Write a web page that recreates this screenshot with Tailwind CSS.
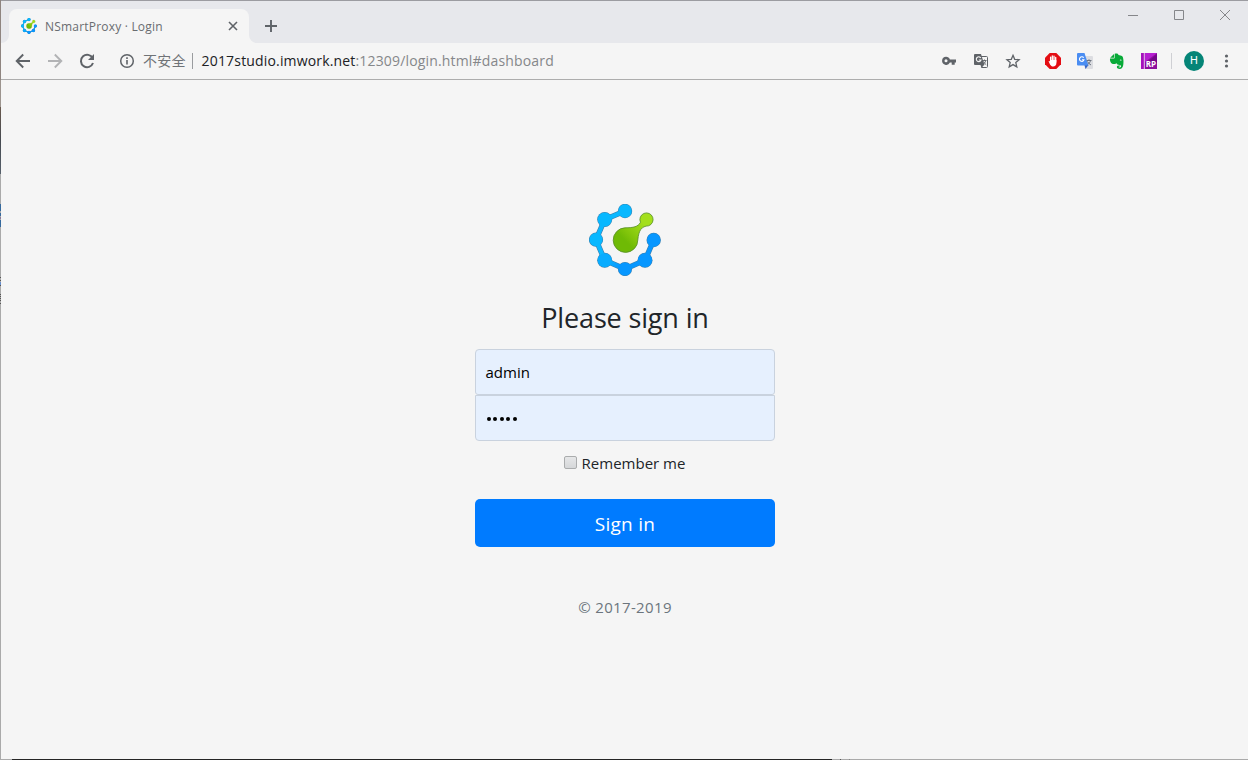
<!DOCTYPE html>
<html lang="en">
<head>
<meta charset="utf-8">
<title>NSmartProxy · Login</title>
<script src="https://cdn.jsdelivr.net/npm/@tailwindcss/browser@4"></script>
</head>
<body class="relative flex h-[760px] w-[1248px] flex-col overflow-hidden bg-[#f5f5f5] font-['Open_Sans','Noto_Sans_CJK_SC',sans-serif] text-[#212529]">
<svg class="absolute h-0 w-0">
  <defs>
    <linearGradient id="b" gradientUnits="userSpaceOnUse" x1="0" y1="0" x2="72" y2="72"><stop offset=".48" stop-color="#0bb8ff"/><stop offset=".66" stop-color="#0797ff"/></linearGradient>
    <linearGradient id="g" x1="0" y1="1" x2="1" y2="0"><stop offset=".3" stop-color="#6fba05"/><stop offset=".42" stop-color="#80c40a"/><stop offset=".75" stop-color="#a3df1c"/></linearGradient>
  </defs>
  <symbol id="logo" viewBox="0 0 72 72">
    <g fill="#3a7fae">
      <path d="M36 7 15.7 15.5 7 35.7l8.7 20.6L36 65l20-8.7L64.7 36" fill="none" stroke="#3a7fae" stroke-width="5.400"/>
      <circle cx="36" cy="7" r="7.200"/><circle cx="15.700" cy="15.500" r="7.500"/><circle cx="7" cy="35.700" r="7.100"/><circle cx="15.700" cy="56.300" r="7.500"/><circle cx="36" cy="65" r="7.100"/><circle cx="56" cy="56.300" r="7.500"/><circle cx="64.700" cy="36" r="7.200"/>
    </g>
    <path d="M36 7 15.7 15.5 7 35.7l8.7 20.6L36 65l20-8.700L64.700 36" fill="none" stroke="url(#b)" stroke-width="4.200"/>
    <g fill="#08b8ff"><circle cx="36" cy="7" r="6.700"/><circle cx="15.700" cy="15.500" r="7"/><circle cx="7" cy="35.700" r="6.600"/><circle cx="15.700" cy="56.300" r="7" fill="#08acff"/></g>
    <g fill="#0797ff"><circle cx="36" cy="65" r="6.600"/><circle cx="56" cy="56.300" r="7"/><circle cx="64.700" cy="36" r="6.700"/></g>
    <path d="M36 23.800c8.500 0 13-1 15.500-5.500a6.600 6.600 0 1 1 8 3.500c-7 .5-9.700 4.200-10.700 14.200A12.300 12.300 0 1 1 36 23.800z" fill="url(#g)" stroke="#568d26" stroke-width=".8"/>
  </symbol>
</svg>

<header class="flex h-[43px] shrink-0 items-end border-t border-[#9c9ca1] bg-[#e7e8ec] pl-[1px]">
  <svg class="h-2 w-2 shrink-0" viewBox="0 0 8 8"><path d="M8 0v8H0a8 8 0 0 0 8-8z" fill="#f5f5f5"/></svg>
  <div class="flex h-[34px] w-[240px] items-center rounded-t-lg bg-[#f5f5f5] pl-3 pr-[11px]">
    <svg class="h-4 w-4"><use href="#logo"/></svg>
    <span class="ml-2 grow whitespace-nowrap pt-[2px] text-[12px] tracking-[0.2px] text-[#696c70]">NSmartProxy · Login</span>
    <svg class="h-[10px] w-[10px]" viewBox="0 0 10 10"><path d="M1 1l8 8M9 1l-8 8" stroke="#5f6368" stroke-width="1.600"/></svg>
  </div>
  <svg class="h-2 w-2 shrink-0" viewBox="0 0 8 8"><path d="M0 0v8h8a8 8 0 0 1-8-8z" fill="#f5f5f5"/></svg>
  <svg class="mb-[11px] ml-[8px] h-3 w-3" viewBox="0 0 12 12"><path d="M6 0v12M0 6h12" stroke="#5f6368" stroke-width="1.900"/></svg>
  <div class="mb-[23px] ml-auto mr-[18px] flex items-center gap-[36px] text-[#85868a]">
    <svg class="h-[10px] w-[10px]" viewBox="0 0 10 10"><path d="M0 5.500h10" stroke="currentColor"/></svg>
    <svg class="h-[10px] w-[10px]" viewBox="0 0 10 10"><path d="M.5.5h9v9h-9z" fill="none" stroke="currentColor"/></svg>
    <svg class="h-[10px] w-[10px]" viewBox="0 0 10 10"><path d="M0 0l10 10M10 0L0 10" stroke="currentColor"/></svg>
  </div>
</header>

<nav class="flex h-[37px] shrink-0 items-center border-b border-[#adadad] pl-[13px] text-[#5f6368]">
  <svg class="h-5 w-5" viewBox="0 0 20 20" fill="none" stroke="currentColor" stroke-width="1.900"><path d="M17 10H4M10.200 3.500 3.700 10l6.500 6.500"/></svg>
  <svg class="ml-3 h-5 w-5 text-[#b2b3b5]" viewBox="0 0 20 20" fill="none" stroke="currentColor" stroke-width="1.900"><path d="M3 10h13M9.800 3.500l6.500 6.500-6.500 6.500"/></svg>
  <svg class="ml-3 h-5 w-5" viewBox="0 0 20 20"><path d="M15.700 7.200A6.200 6.200 0 1 0 16 12" fill="none" stroke="currentColor" stroke-width="2"/><path d="M17 3v6h-6z" fill="currentColor"/></svg>
  <svg class="ml-[22px] h-4 w-4" viewBox="0 0 16 16"><circle cx="8" cy="8" r="6.300" fill="none" stroke="currentColor" stroke-width="1.500"/><path d="M7.200 7h1.600v4.500H7.200zM7.200 4.300h1.600v1.600H7.200z" fill="currentColor"/></svg>
  <span class="mb-[2px] ml-[8px] whitespace-nowrap font-['Noto_Sans_CJK_SC',sans-serif] text-[14px] tracking-[0.2px] text-[#6f7377]">不安全</span>
  <span class="ml-[6px] h-4 w-px bg-[#9a9c9f]"></span>
  <span class="mb-[2px] ml-[9px] whitespace-nowrap text-[14px] tracking-[0.165px] text-[#85878a]"><span class="text-[#202124]">2017studio.imwork.net</span>:12309/login.html#dashboard</span>
  <div class="ml-auto mr-[14px] flex items-center">
    <svg class="h-4 w-4" viewBox="0 0 16 16"><path d="M5 3.700a4.100 4.100 0 0 1 3.900 2.800H15v3h-1.300v2.300h-3V9.500H8.900A4.100 4.100 0 1 1 5 3.700z" fill="currentColor"/><circle cx="5" cy="7.800" r="1.500" fill="#f5f5f5"/></svg>
    <svg class="ml-4 h-4 w-4" viewBox="0 0 16 16"><path d="M6 3.500h7.500a1 1 0 0 1 1 1v9a1 1 0 0 1-1 1H8.500" fill="none" stroke="currentColor"/><path d="M2 1h6l3.500 11H2a1 1 0 0 1-1-1V2a1 1 0 0 1 1-1zM7.500 12h3.500l-2.500 3z" fill="currentColor"/><path d="M7.800 5A2.400 2.400 0 1 0 8 7H5.800" fill="none" stroke="#f5f5f5" stroke-width="1.100"/><path d="M9.500 7.500h4M11.500 6.500v1M12.800 7.500c-.3 1.500-1.300 2.700-2.300 3.500M10.500 8.500c.7 1.400 1.600 2.400 2.700 3.200" fill="none" stroke="currentColor" stroke-width=".9"/></svg>
    <svg class="ml-4 h-4 w-4" viewBox="0 0 16 16"><path d="M8 2.300l1.700 4 4.400.4-3.300 2.900 1 4.300L8 11.600l-3.800 2.300 1-4.300-3.300-2.900 4.400-.4z" fill="none" stroke="currentColor" stroke-width="1.300"/></svg>
    <svg class="ml-6 h-4 w-4" viewBox="0 0 16 16"><path d="M4.700 0h6.600L16 4.700v6.600L11.300 16H4.700L0 11.300V4.700z" fill="#e40d13"/><path d="M5.600 8.500V4.200M7.300 8V3M9 8V3.200M10.700 9V4.500" stroke="#fff" stroke-width="1.300" stroke-linecap="round"/><path d="M3.600 8.300c.6-.5 1.200-.2 1.600.6V7h6.200v3c0 2-1.200 3.500-3.300 3.500S5.200 12.300 3.600 8.300z" fill="#fff"/></svg>
    <svg class="ml-4 h-4 w-4" viewBox="0 0 16 16"><path d="M6 3h9a1 1 0 0 1 1 1v11a1 1 0 0 1-1 1H8z" fill="#dcdde1"/><path d="M7.500 12h4l-3 4z" fill="#3563c4"/><path d="M1 0h6.500l4 12.500H1a1 1 0 0 1-1-1V1a1 1 0 0 1 1-1z" fill="#4a8df2"/><path d="M6.700 4.800A2.300 2.300 0 1 0 7 6.700H5" fill="none" stroke="#fff" stroke-width="1.100"/><path d="M9.700 7.500h4.800M12 6.300v1.200M13.500 7.500c-.3 1.800-1.500 3-2.800 4M10.500 8.500c.8 1.500 2 2.700 3.500 3.500" fill="none" stroke="#6d7480"/></svg>
    <svg class="ml-4 h-4 w-4" viewBox="0 0 16 16"><path d="M5 1 1.200 4.800H4.500a.6.600 0 0 0 .6-.6zM5.700.8v3.700c0 .6-.4 1-1 1H1C.7 7.500 1.500 10 3 10.700c2 .6 4 .5 4.400-.7 .5 1.500 1.600 1.700 3 1.900 1.500.2 1.700.8 1.600 1.600-.1.700-1 .9-1.600.9-.7 0-.8-.5-.5-1h1v-.9H9.500c-1.300 0-1.700 1-1.600 1.800.2 1.200 1.100 1.700 2.800 1.700 3.500 0 4-4.500 3.700-9-.2-2.500-.7-3.900-2-4.300L9.500 2C9 .5 7.500.2 5.700.8z" fill="#08aa38"/><path d="M10.800 7.400c.2-1.200 1.700-1.200 1.900.2z" fill="#f5f5f5"/></svg>
    <svg class="ml-4 h-4 w-4" viewBox="0 0 16 16"><path d="M0 0h16v16H0z" fill="#8d109e"/><path d="M4 0h12L4 9z" fill="#b61fd1"/><path d="M16 1v9H5z" fill="#74068a"/><path d="M0 0h2.800v16H0z" fill="#a511bd"/><path d="M3.300 0v16" stroke="#f5d5fa" stroke-width=".9"/><text x="4.700" y="14.400" font-family="Open Sans" font-size="8" font-weight="700" fill="#fff">RP</text></svg>
    <span class="ml-[14px] h-4 w-px bg-[#cfd0d4]"></span>
    <span class="ml-3 flex h-5 w-5 items-center justify-center rounded-full bg-[#058577] pt-px font-[Roboto] text-[11px] text-white">H</span>
    <svg class="ml-[14px] h-4 w-4" viewBox="0 0 16 16" fill="currentColor"><circle cx="8.500" cy="3" r="1.600"/><circle cx="8.500" cy="8" r="1.600"/><circle cx="8.500" cy="13" r="1.600"/></svg>
  </div>
</nav>

<main class="flex grow flex-col items-center pl-[2px] pt-[124px]">
  <svg class="h-[72px] w-[72px] shrink-0 overflow-visible"><use href="#logo"/></svg>
  <h1 class="mt-[25px] text-[27px] leading-[34px] tracking-[-0.15px]">Please sign in</h1>
  <div class="mt-[14px] flex h-[46px] w-[300px] items-center rounded-t-[4px] rounded-b-[3px] border border-[#c9d2de] bg-[#e6f0fe] px-[9.500px] text-[15px] text-black">admin</div>
  <div class="flex h-[46px] w-[300px] items-center gap-[2.500px] rounded-b-[4px] border border-[#c9d2de] bg-[#e6f0fe] px-[10.500px] pt-[2px]">
    <i class="h-1 w-1 rounded-full bg-black"></i><i class="h-1 w-1 rounded-full bg-black"></i><i class="h-1 w-1 rounded-full bg-black"></i><i class="h-1 w-1 rounded-full bg-black"></i><i class="h-1 w-1 rounded-full bg-black"></i>
  </div>
  <label class="mt-[10px] flex h-6 items-center pr-px text-[15px]">
    <span class="mb-px mr-[5px] h-[13px] w-[13px] rounded-[2px] border border-[#aaacad] bg-linear-to-b from-[#e6e7e8] to-[#d5d7d9]"></span>Remember me
  </label>
  <button class="mt-[24px] h-12 w-[300px] rounded-[5px] bg-[#007bff] pt-[1px] text-[19px] leading-6 tracking-[0.25px] text-white">Sign in</button>
  <p class="mt-[48px] text-[15px] leading-6 tracking-[0.350px] text-[#6c757d]">© 2017-2019</p>
</main>

<div class="absolute inset-y-0 left-0 flex w-px flex-col bg-[#aaa]">
  <i class="h-[80px] bg-[#8f8580]"></i><i class="h-[27px] bg-[#9c948e]"></i><i class="h-[67px] bg-linear-to-b from-[#69594e] via-[#454a50] to-[#56606b]"></i>
  <i class="mt-[30px] h-[7px] bg-[#35699d]"></i><i class="mt-[2px] h-[3px] bg-[#35699d]"></i><i class="mt-[1px] h-[2px] bg-[#88799a]"></i><i class="mt-[1px] h-[7px] bg-[#35699d]"></i>
  <i class="mt-[50px] h-px bg-[#555]"></i><i class="mt-[2px] h-px bg-[#555]"></i><i class="mt-[1px] h-[3px] bg-[#668dcc]"></i><i class="h-px bg-[#555]"></i>
  <i class="mt-[8px] h-px bg-[#555]"></i><i class="mt-px h-px bg-[#555]"></i><i class="mt-px h-px bg-[#555]"></i><i class="mt-px h-px bg-[#555]"></i><i class="mt-[2px] h-px bg-[#555]"></i>
</div>
<div class="absolute inset-x-0 bottom-0 flex h-px bg-[#aaa]"><i class="ml-3 w-[820px] bg-[#252525]"></i><i class="ml-2 w-px bg-[#555]"></i><i class="ml-2 w-px bg-[#888]"></i></div>
</body>
</html>
